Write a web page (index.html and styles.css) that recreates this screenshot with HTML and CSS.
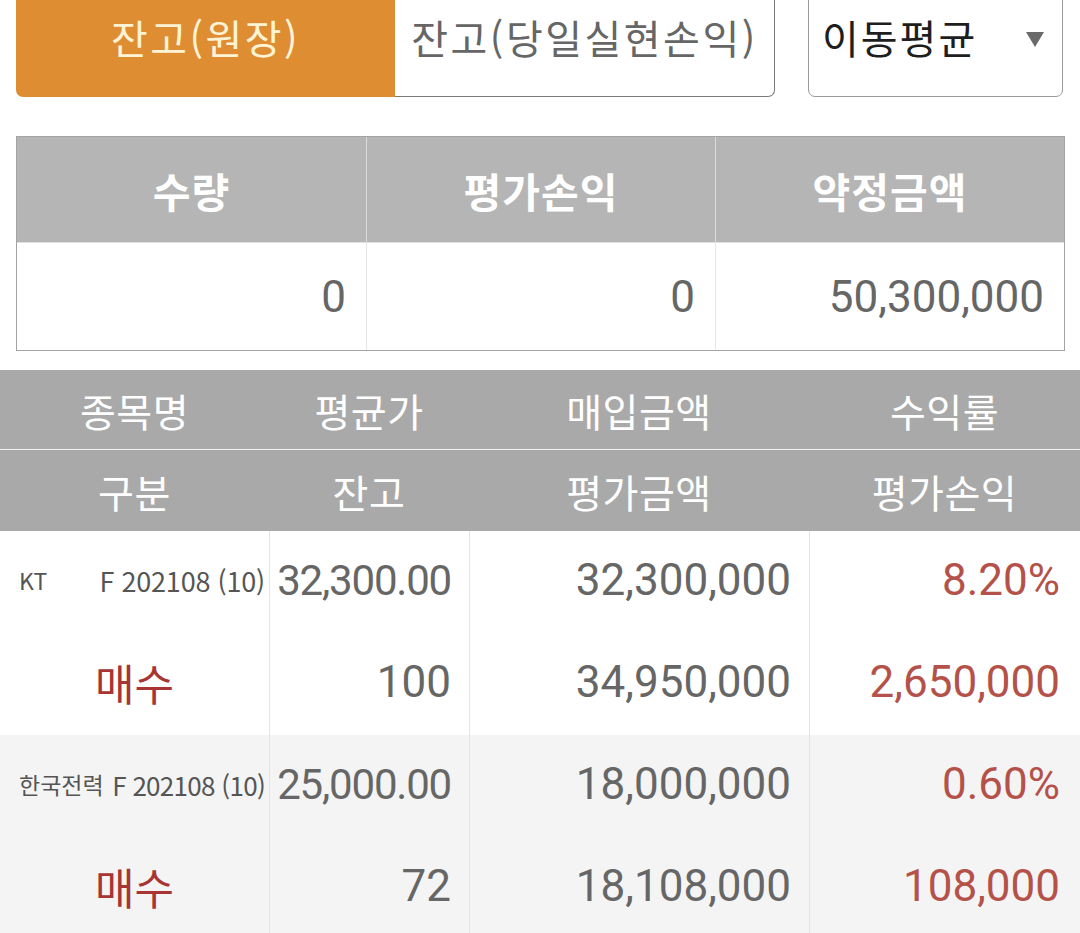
FILE: index.html
```html
<!DOCTYPE html>
<html lang="ko">
<head>
<meta charset="utf-8">
<link rel="stylesheet" href="styles.css">
</head>
<body>
<div class="topbar">
  <div class="tabs">
    <div class="tab tab-active">잔고(원장)</div>
    <div class="tab tab-idle">잔고(당일실현손익)</div>
  </div>
  <div class="select">
    <span class="select-label">이동평균</span>
    <svg class="select-arrow" width="18" height="16" viewBox="0 0 18 16"><polygon points="0,1 18,1 9,16" fill="#6a6a6a"/></svg>
  </div>
</div>

<div class="summary">
  <div class="sum-head">수량</div>
  <div class="sum-head sep">평가손익</div>
  <div class="sum-head sep">약정금액</div>
  <div class="sum-val">0</div>
  <div class="sum-val sep">0</div>
  <div class="sum-val sep">50,300,000</div>
</div>

<div class="list">
  <div class="lh lh-top">종목명</div>
  <div class="lh lh-top">평균가</div>
  <div class="lh lh-top">매입금액</div>
  <div class="lh lh-top">수익률</div>
  <div class="lh">구분</div>
  <div class="lh">잔고</div>
  <div class="lh">평가금액</div>
  <div class="lh">평가손익</div>

  <div class="c name"><span>KT</span><span class="code">F 202108 (10)</span></div>
  <div class="c num sep price">32,300.00</div>
  <div class="c num sep">32,300,000</div>
  <div class="c num sep up">8.20%</div>
  <div class="c side">매수</div>
  <div class="c num sep">100</div>
  <div class="c num sep">34,950,000</div>
  <div class="c num sep up">2,650,000</div>

  <div class="c name alt"><span>한국전력</span><span class="code code-tight">F 202108 (10)</span></div>
  <div class="c num sep price alt">25,000.00</div>
  <div class="c num sep alt">18,000,000</div>
  <div class="c num sep up alt">0.60%</div>
  <div class="c side alt">매수</div>
  <div class="c num sep alt">72</div>
  <div class="c num sep alt">18,108,000</div>
  <div class="c num sep up alt">108,000</div>
</div>
</body>
</html>
```

FILE: styles.css
```css
html, body {
  margin: 0;
  padding: 0;
  background: #ffffff;
}
body {
  font-family: Roboto, "Noto Sans CJK KR", sans-serif;
  color: #626262;
  width: 1080px;
  overflow: hidden;
}

.topbar {
  display: flex;
  margin: -24px 17px 0 16px;
  height: 121px;
  gap: 33px;
}
.tabs {
  display: flex;
  width: 759px;
}
.tab {
  flex: 1;
  display: flex;
  align-items: center;
  justify-content: center;
  font-family: "Noto Sans CJK KR", sans-serif;
  font-size: 40px;
  letter-spacing: 2.5px;
  box-sizing: border-box;
}
.tab-active {
  background: #df8d32;
  color: #fdf3d5;
  border-bottom-left-radius: 7px;
}
.tab-idle {
  background: #ffffff;
  color: #666666;
  border: 1px solid #7a7a7a;
  border-left: none;
  border-bottom-right-radius: 7px;
}
.select {
  flex: 1;
  box-sizing: border-box;
  border: 1px solid #9a9a9a;
  border-bottom-left-radius: 7px;
  border-bottom-right-radius: 7px;
  display: flex;
  align-items: center;
  justify-content: space-between;
  padding: 0 18px 0 13px;
}
.select-label {
  font-family: "Noto Sans CJK KR", sans-serif;
  font-size: 40px;
  letter-spacing: 2px;
  color: #1e1e1e;
}
.select-arrow {
  display: block;
  margin-top: 4px;
}

.summary {
  margin: 39px 15px 0 16px;
  border: 1px solid #a3a3a3;
  display: grid;
  grid-template-columns: 1fr 1fr 1fr;
  grid-template-rows: 106px 107px;
}
.sum-head {
  background: #b5b5b5;
  color: #ffffff;
  font-family: "Noto Sans CJK KR", sans-serif;
  font-weight: 700;
  font-size: 41px;
  letter-spacing: 1px;
  display: flex;
  align-items: center;
  justify-content: center;
  border-bottom: 1px solid #e0e0e0;
}
.sum-head.sep {
  border-left: 1px solid #dcdcdc;
}
.sum-val {
  font-size: 44px;
  display: flex;
  align-items: center;
  justify-content: flex-end;
  padding-right: 20px;
  color: #666666;
}
.sum-val.sep {
  border-left: 1px solid #e6e6e6;
}

.list {
  margin-top: 19px;
  display: grid;
  grid-template-columns: 269px 200px 340px 271px;
  grid-auto-rows: 102px;
  grid-template-rows: 80px 81px;
}
.lh {
  background: #a9a9a9;
  color: #ffffff;
  font-family: "Noto Sans CJK KR", sans-serif;
  font-size: 39px;
  letter-spacing: 0.5px;
  display: flex;
  align-items: center;
  justify-content: center;
}
.lh-top {
  border-bottom: 1px solid #f2f2f2;
}
.c {
  display: flex;
  align-items: center;
  background: #ffffff;
  padding-bottom: 4px;
}
.c.alt {
  background: #f4f4f4;
}
.sep {
  border-left: 1px solid #e4e4e4;
}
.num {
  justify-content: flex-end;
  padding-right: 18px;
  font-size: 44px;
  color: #666666;
}
.num.price {
  font-size: 42px;
  letter-spacing: -1.2px;
}
.up {
  color: #b4524a;
  padding-right: 20px;
}
.name {
  justify-content: space-between;
  padding: 0 4px 4px 19px;
  font-family: "Noto Sans CJK KR", sans-serif;
  font-size: 23px;
  color: #555555;
}
.code {
  font-size: 27px;
  letter-spacing: -0.2px;
}
.code.code-tight {
  font-size: 26px;
  letter-spacing: -0.7px;
}
.side {
  justify-content: center;
  font-family: "Noto Sans CJK KR", sans-serif;
  font-size: 43px;
  color: #a83434;
}
```
